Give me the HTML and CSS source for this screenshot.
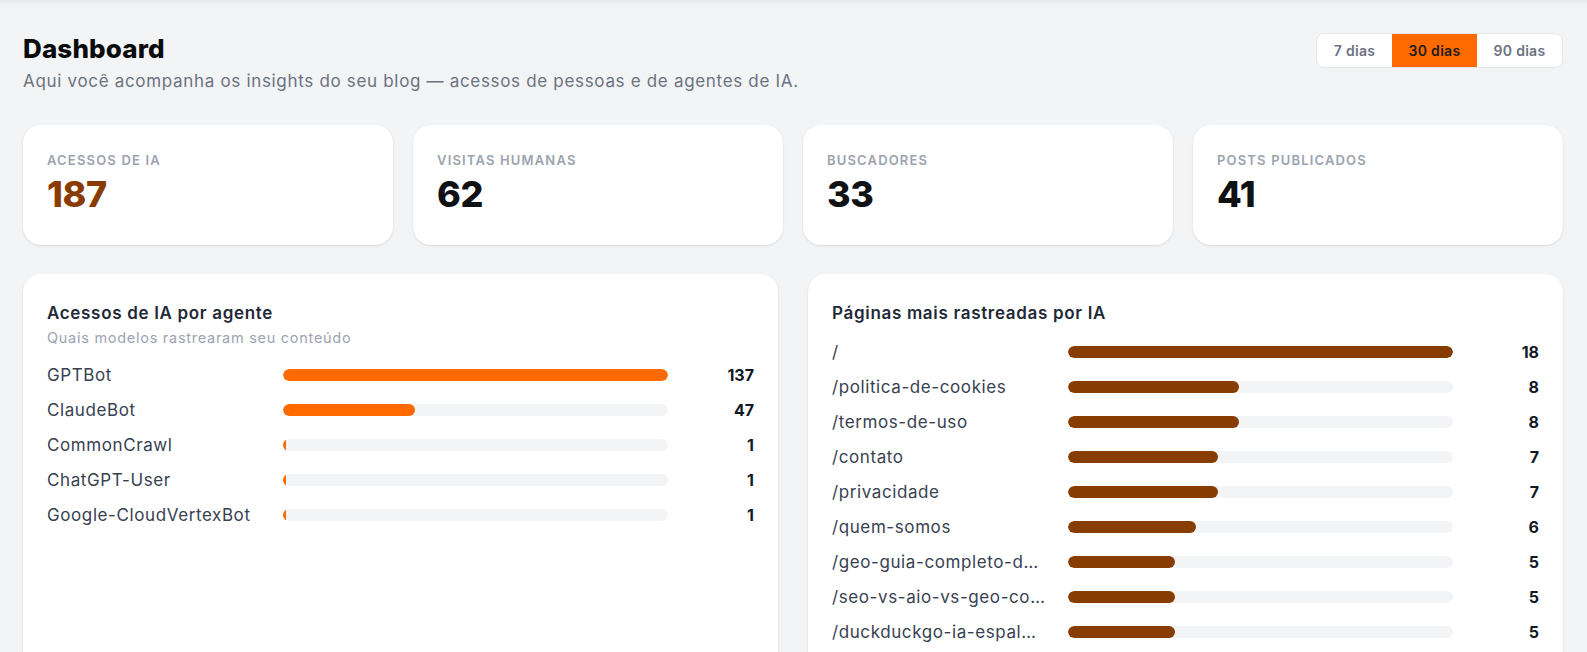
FILE: index.html
```html
<!DOCTYPE html>
<html lang="pt-BR">
<head>
<meta charset="utf-8">
<title>Dashboard</title>
<link rel="stylesheet" href="styles.css">
</head>
<body>
<main class="main">
  <header class="page-header">
    <div class="heading">
      <h1 class="title">Dashboard</h1>
      <p class="subtitle">Aqui você acompanha os insights do seu blog — acessos de pessoas e de agentes de IA.</p>
    </div>
    <div class="range">
      <button class="range-btn">7 dias</button>
      <button class="range-btn active">30 dias</button>
      <button class="range-btn">90 dias</button>
    </div>
  </header>

  <section class="stats">
    <div class="stat">
      <div class="stat-label">Acessos de IA</div>
      <div class="stat-value accent">187</div>
    </div>
    <div class="stat">
      <div class="stat-label">Visitas humanas</div>
      <div class="stat-value">62</div>
    </div>
    <div class="stat">
      <div class="stat-label">Buscadores</div>
      <div class="stat-value">33</div>
    </div>
    <div class="stat">
      <div class="stat-label">Posts publicados</div>
      <div class="stat-value">41</div>
    </div>
  </section>

  <section class="panels">
    <div class="panel">
      <h2 class="panel-title">Acessos de IA por agente</h2>
      <p class="panel-sub">Quais modelos rastrearam seu conteúdo</p>
      <div class="rows rows-agents">
        <div class="row"><span class="row-label">GPTBot</span><div class="track"><div class="fill orange" style="width:100%"></div></div><span class="row-value">137</span></div>
        <div class="row"><span class="row-label">ClaudeBot</span><div class="track"><div class="fill orange" style="width:34.3%"></div></div><span class="row-value">47</span></div>
        <div class="row"><span class="row-label">CommonCrawl</span><div class="track"><div class="fill orange" style="width:0.73%"></div></div><span class="row-value">1</span></div>
        <div class="row"><span class="row-label">ChatGPT-User</span><div class="track"><div class="fill orange" style="width:0.73%"></div></div><span class="row-value">1</span></div>
        <div class="row"><span class="row-label">Google-CloudVertexBot</span><div class="track"><div class="fill orange" style="width:0.73%"></div></div><span class="row-value">1</span></div>
      </div>
    </div>

    <div class="panel">
      <h2 class="panel-title">Páginas mais rastreadas por IA</h2>
      <div class="rows rows-pages">
        <div class="row"><span class="row-label">/</span><div class="track"><div class="fill brown" style="width:100%"></div></div><span class="row-value">18</span></div>
        <div class="row"><span class="row-label">/politica-de-cookies</span><div class="track"><div class="fill brown" style="width:44.4%"></div></div><span class="row-value">8</span></div>
        <div class="row"><span class="row-label">/termos-de-uso</span><div class="track"><div class="fill brown" style="width:44.4%"></div></div><span class="row-value">8</span></div>
        <div class="row"><span class="row-label">/contato</span><div class="track"><div class="fill brown" style="width:38.9%"></div></div><span class="row-value">7</span></div>
        <div class="row"><span class="row-label">/privacidade</span><div class="track"><div class="fill brown" style="width:38.9%"></div></div><span class="row-value">7</span></div>
        <div class="row"><span class="row-label">/quem-somos</span><div class="track"><div class="fill brown" style="width:33.3%"></div></div><span class="row-value">6</span></div>
        <div class="row"><span class="row-label">/geo-guia-completo-d…</span><div class="track"><div class="fill brown" style="width:27.8%"></div></div><span class="row-value">5</span></div>
        <div class="row"><span class="row-label">/seo-vs-aio-vs-geo-co…</span><div class="track"><div class="fill brown" style="width:27.8%"></div></div><span class="row-value">5</span></div>
        <div class="row"><span class="row-label">/duckduckgo-ia-espal…</span><div class="track"><div class="fill brown" style="width:27.8%"></div></div><span class="row-value">5</span></div>
      </div>
    </div>
  </section>
</main>
</body>
</html>
```

FILE: styles.css
```css
html, body {
  margin: 0;
  padding: 0;
}

body {
  font-family: Inter, "Noto Sans", sans-serif;
  background: #f3f4f6;
  color: #111827;
}

.main {
  box-sizing: border-box;
  height: 100vh;
  overflow: hidden;
  padding: 33px 24px 0 23px;
  box-shadow: inset 0 8px 8px -8px rgba(0, 0, 0, 0.10);
}

/* Header */
.page-header {
  display: flex;
  justify-content: space-between;
  align-items: flex-start;
  margin-bottom: 32px;
}

.title {
  margin: 0;
  font-size: 26px;
  line-height: 32px;
  font-weight: 800;
  color: #0b0b0c;
  letter-spacing: 0.005em;
}

.subtitle {
  margin: 4px 0 0;
  font-size: 17px;
  line-height: 24px;
  color: #6b7280;
  letter-spacing: 0.04em;
}

.range {
  display: flex;
  background: #ffffff;
  border: 1px solid #e5e7eb;
  border-radius: 8px;
  overflow: hidden;
  height: 35px;
  box-sizing: border-box;
}

.range-btn {
  border: 0;
  background: transparent;
  font-family: inherit;
  font-size: 14px;
  font-weight: 600;
  color: #6b7280;
  letter-spacing: 0.02em;
  padding: 0 15px;
  height: 33px;
  min-width: 75px;
  cursor: pointer;
}

.range-btn:nth-child(n+2) {
  min-width: 85px;
}

.range-btn.active {
  background: #ff6a00;
  color: #1c1c1c;
}

/* Stat cards */
.stats {
  display: grid;
  grid-template-columns: repeat(4, 1fr);
  gap: 20px;
  margin-bottom: 29px;
}

.stat {
  background: #ffffff;
  border-radius: 18px;
  padding: 27px 24px 31px;
  box-shadow: 0 1px 3px rgba(0, 0, 0, 0.08), 0 1px 2px rgba(0, 0, 0, 0.04);
}

.stat-label {
  font-size: 13px;
  line-height: 16px;
  font-weight: 600;
  color: #9ca3af;
  text-transform: uppercase;
  letter-spacing: 0.09em;
}

.stat-value {
  margin-top: 6px;
  font-size: 36px;
  line-height: 40px;
  font-weight: 800;
  color: #0f1114;
  letter-spacing: -0.01em;
}

.stat-value.accent {
  color: #8a3c00;
}

/* Panels */
.panels {
  display: grid;
  grid-template-columns: 1fr 1fr;
  gap: 30px;
}

.panel {
  background: #ffffff;
  border-radius: 18px;
  padding: 27px 24px 24px;
  min-height: 420px;
  box-shadow: 0 1px 3px rgba(0, 0, 0, 0.08), 0 1px 2px rgba(0, 0, 0, 0.04);
}

.panel-title {
  margin: 0;
  font-size: 17px;
  line-height: 24px;
  font-weight: 600;
  color: #1f2937;
  letter-spacing: 0.04em;
}

.panel-sub {
  margin: 3px 0 0;
  font-size: 14.5px;
  line-height: 20px;
  color: #9ca3af;
  letter-spacing: 0.05em;
}

.rows {
  display: flex;
  flex-direction: column;
  gap: 11px;
}

.rows-agents {
  margin-top: 15px;
}

.rows-pages {
  margin-top: 15px;
}

.row {
  display: grid;
  grid-template-columns: 220px 1fr 70px;
  column-gap: 16px;
  align-items: center;
  height: 24px;
}

.row-label {
  font-size: 17px;
  line-height: 24px;
  color: #374151;
  letter-spacing: 0.035em;
  white-space: nowrap;
  overflow: hidden;
  text-overflow: ellipsis;
}

.track {
  height: 12px;
  background: #f3f4f6;
  border-radius: 999px;
  overflow: hidden;
}

.fill {
  height: 100%;
  border-radius: 999px;
}

.fill.orange {
  background: #ff6a00;
}

.fill.brown {
  background: #873d00;
}

.row-value {
  text-align: right;
  font-size: 16px;
  line-height: 24px;
  font-weight: 700;
  color: #111827;
}
```
